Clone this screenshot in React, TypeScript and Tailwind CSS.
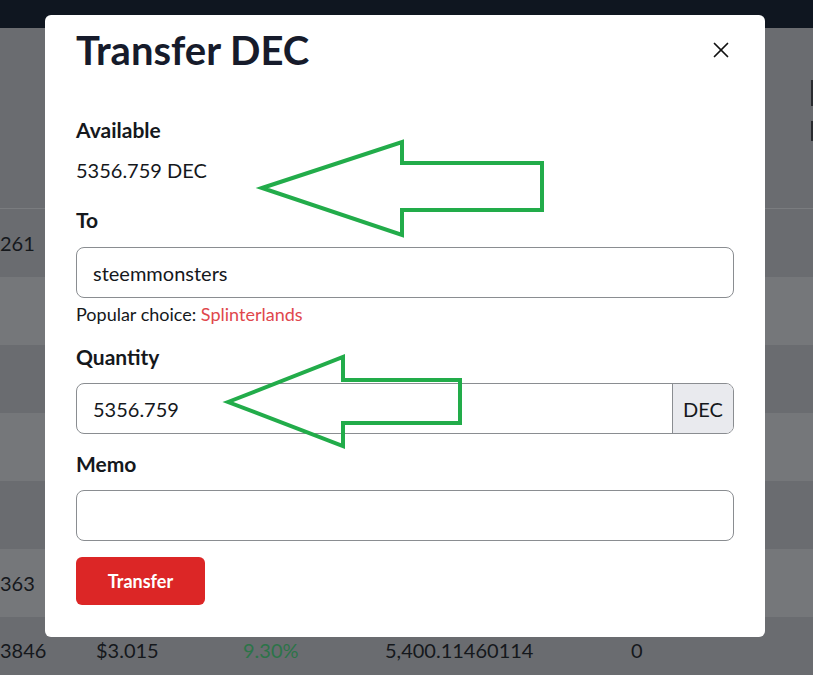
import { X } from "lucide-react"

const rows = [
  { shade: "bg-[#6a6c70]", cells: ["261"] },
  { shade: "bg-[#75777a]", cells: [] },
  { shade: "bg-[#6a6c70]", cells: [] },
  { shade: "bg-[#75777a]", cells: [] },
  { shade: "bg-[#6a6c70]", cells: [] },
  { shade: "bg-[#75777a]", cells: ["363"] },
]

function Arrow({ points }: { points: string }) {
  return (
    <polygon points={points} fill="none" stroke="#22ac4a" strokeWidth="4" strokeLinejoin="miter" />
  )
}

export default function App() {
  return (
    <div className="relative w-[813px] h-[675px] overflow-hidden bg-[#6a6c70] font-['Lato',sans-serif] text-[#15181c]">
      {/* page behind the modal */}
      <div className="h-7 bg-[#0f1620]"></div>
      <div className="h-[181px] border-b border-[#7a7c7f] relative">
        <div className="absolute right-0 top-[52px] w-[2px] h-[26px] bg-[#2a2c30]"></div>
        <div className="absolute right-0 top-[93px] w-[2px] h-[20px] bg-[#2a2c30]"></div>
      </div>
      {rows.map((row, i) => (
        <div key={i} className={`h-[68px] flex items-center text-[20px] ${row.shade}`}>
          <span className="w-[33px] text-right">{row.cells[0] ?? ""}</span>
        </div>
      ))}
      <div className="h-[66px] flex items-center text-[20px]">
        <span className="w-[45px] text-right">3846</span>
        <span className="ml-[51px] w-[147px]">$3.015</span>
        <span className="w-[142px] text-[#2c7448]">9.30%</span>
        <span className="w-[246px]">5,400.11460114</span>
        <span>0</span>
      </div>

      {/* modal */}
      <div className="absolute left-[45px] top-[15px] w-[720px] h-[622px] bg-white rounded-md px-[31px] pt-[11px]">
        <div className="flex items-center justify-between">
          <h2 className="text-[40px] font-bold leading-[48px] text-[#161b2b]">Transfer DEC</h2>
          <X className="w-[26px] h-[26px] text-[#111]" strokeWidth={1.6} />
        </div>

        <div className="mt-[44px] text-[21px] font-bold leading-6">Available</div>
        <div className="mt-4 text-[20px] leading-6">5356.759 DEC</div>

        <div className="mt-[26px] text-[21px] font-bold leading-6">To</div>
        <div className="mt-[15px] h-[51px] border border-[#8a8d91] rounded-lg flex items-center px-4 text-[20px]">
          steemmonsters
        </div>
        <div className="mt-[5px] text-[18px] leading-[22px]">
          Popular choice: <span className="text-[#e0474c]">Splinterlands</span>
        </div>

        <div className="mt-[20px] text-[21px] font-bold leading-6">Quantity</div>
        <div className="mt-[14px] h-[51px] border border-[#8a8d91] rounded-lg flex text-[20px] overflow-hidden">
          <div className="flex-1 flex items-center px-4">5356.759</div>
          <div className="w-[61px] border-l border-[#8a8d91] bg-[#e9eaee] flex items-center justify-center">DEC</div>
        </div>

        <div className="mt-[18px] text-[21px] font-bold leading-6">Memo</div>
        <div className="mt-[14px] h-[51px] border border-[#8a8d91] rounded-lg"></div>

        <button className="mt-[16px] w-[129px] h-[48px] rounded-md bg-[#dc2626] text-white font-bold text-[18px]">
          Transfer
        </button>
      </div>

      {/* annotation arrows */}
      <svg className="absolute left-0 top-0 pointer-events-none" width="813" height="675">
        <Arrow points="262,188 402,142 402,163 542,163 542,210 402,210 402,235" />
        <Arrow points="228,402 343,357 343,380 460,380 460,423 343,423 343,446" />
      </svg>
    </div>
  )
}
